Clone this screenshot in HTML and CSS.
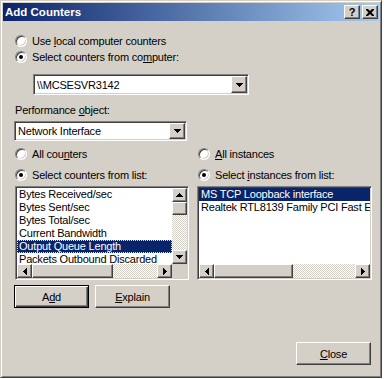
FILE: index.html
```html
<!DOCTYPE html>
<html lang="en">
  <head>
    <meta charset="UTF-8" />
    <title>Add Counters</title>
    <link rel="stylesheet" href="styles.css">
  </head>
  <body>
    <div class="window">
      <!-- Caption -->
      <div class="titlebar">
        <span class="title">Add Counters</span>
        <div class="caption-buttons">
          <button class="cap-btn">?</button>
          <button class="cap-btn">
            <svg width="8" height="7" viewBox="0 0 8 7"><path d="M0 0h2l2 2 2-2h2v1L5.5 3.5 8 6v1H6L4 5 2 7H0V6l2.5-2.5L0 1z" fill="#000"/></svg>
          </button>
        </div>
      </div>

      <div class="content">
        <!-- Computer source -->
        <div class="radio-row"><span class="radio"></span><span>Use <u>l</u>ocal computer counters</span></div>
        <div class="radio-row"><span class="radio checked"></span><span>Select counters from co<u>m</u>puter:</span></div>
        <div class="field combo combo-computer">
          <span class="combo-text">\\MCSESVR3142</span>
          <span class="combo-btn"><svg width="7" height="4" viewBox="0 0 7 4"><path d="M0 0h7v1H6v1H5v1H4v1H3V3H2V2H1V1H0z"/></svg></span>
        </div>

        <!-- Performance object -->
        <div class="label">Performance <u>o</u>bject:</div>
        <div class="field combo combo-object">
          <span class="combo-text">Network Interface</span>
          <span class="combo-btn"><svg width="7" height="4" viewBox="0 0 7 4"><path d="M0 0h7v1H6v1H5v1H4v1H3V3H2V2H1V1H0z"/></svg></span>
        </div>

        <div class="columns">
          <!-- Counters -->
          <div class="col">
            <div class="radio-row"><span class="radio"></span><span>All cou<u>n</u>ters</span></div>
            <div class="radio-row"><span class="radio checked"></span><span>Select counters from list:</span></div>
            <div class="field listbox listbox-counters">
              <div class="items">
                <div class="item">Bytes Received/sec</div>
                <div class="item">Bytes Sent/sec</div>
                <div class="item">Bytes Total/sec</div>
                <div class="item">Current Bandwidth</div>
                <div class="item selected focused">Output Queue Length</div>
                <div class="item">Packets Outbound Discarded</div>
              </div>
              <div class="vscroll">
                <span class="sb-btn"><svg width="7" height="4" viewBox="0 0 7 4"><path d="M3 0h1v1h1v1h1v1h1v1H0V3h1V2h1V1h1z"/></svg></span>
                <span class="sb-thumb"></span>
                <span class="sb-track"></span>
                <span class="sb-btn"><svg width="7" height="4" viewBox="0 0 7 4"><path d="M0 0h7v1H6v1H5v1H4v1H3V3H2V2H1V1H0z"/></svg></span>
              </div>
              <div class="hscroll">
                <span class="sb-btn"><svg width="4" height="7" viewBox="0 0 4 7"><path d="M3 0h1v7H3V6H2V5H1V4H0V3h1V2h1V1h1z"/></svg></span>
                <span class="sb-thumb" style="width: 81px"></span>
                <span class="sb-track"></span>
                <span class="sb-btn"><svg width="4" height="7" viewBox="0 0 4 7"><path d="M0 0h1v1h1v1h1v1h1v1H3v1H2v1H1v1H0z"/></svg></span>
              </div>
              <div class="sb-corner"></div>
            </div>
          </div>

          <!-- Instances -->
          <div class="col">
            <div class="radio-row"><span class="radio"></span><span><u>A</u>ll instances</span></div>
            <div class="radio-row"><span class="radio checked"></span><span>Select <u>i</u>nstances from list:</span></div>
            <div class="field listbox listbox-instances">
              <div class="items">
                <div class="item selected">MS TCP Loopback interface</div>
                <div class="item">Realtek RTL8139 Family PCI Fast Ethernet NIC</div>
              </div>
              <div class="hscroll">
                <span class="sb-btn"><svg width="4" height="7" viewBox="0 0 4 7"><path d="M3 0h1v7H3V6H2V5H1V4H0V3h1V2h1V1h1z"/></svg></span>
                <span class="sb-thumb" style="width: 79px"></span>
                <span class="sb-track"></span>
                <span class="sb-btn"><svg width="4" height="7" viewBox="0 0 4 7"><path d="M0 0h1v1h1v1h1v1h1v1H3v1H2v1H1v1H0z"/></svg></span>
              </div>
            </div>
          </div>
        </div>

        <div class="button-row">
          <button class="btn default">A<u>d</u>d</button>
          <button class="btn"><u>E</u>xplain</button>
        </div>

        <div class="close-row">
          <button class="btn"><u>C</u>lose</button>
        </div>
      </div>
    </div>
  </body>
</html>
```

FILE: styles.css
```css
/* Page */
html,
body {
  margin: 0;
}
body {
  background: #fff;
  font-family: "Liberation Sans", Arial, sans-serif;
  font-size: 11px;
  letter-spacing: -0.2px;
  color: #000;
}
/* Classic window frame */
.window {
  width: 382px;
  height: 378px;
  box-sizing: border-box;
  background: #d4d0c8;
  border: 1px solid;
  border-color: #d4d0c8 #404040 #404040 #d4d0c8;
  box-shadow: inset 1px 1px #fff, inset -1px -1px #808080;
  padding: 2px;
}
.titlebar {
  height: 18px;
  display: flex;
  align-items: center;
  padding-left: 2px;
  background: linear-gradient(to right, #0a246a, #a6caf0);
}
.title {
  flex: 1;
  color: #fff;
  font-weight: bold;
  font-size: 11.5px;
  letter-spacing: 0;
}
.caption-buttons {
  display: flex;
  gap: 2px;
  margin-right: 1px;
}
.cap-btn,
.combo-btn,
.sb-btn,
.sb-thumb,
.btn {
  box-sizing: border-box;
  background: #d4d0c8;
  border: 1px solid;
  border-color: #fff #404040 #404040 #fff;
  box-shadow: inset -1px -1px #808080;
}
.cap-btn {
  width: 16px;
  height: 14px;
  padding: 0;
  display: flex;
  align-items: center;
  justify-content: center;
  font-family: "Liberation Sans", Arial, sans-serif;
  font-weight: bold;
  font-size: 11px;
  line-height: 1;
}
/* Dialog body */
.content {
  padding: 12px 0 0 11px;
}
.radio-row {
  display: flex;
  align-items: center;
  gap: 5px;
  height: 16px;
  padding-left: 1px;
  white-space: nowrap;
}
.radio {
  position: relative;
  flex: none;
  width: 12px;
  height: 12px;
  box-sizing: border-box;
  border-radius: 50%;
  border: 1px solid;
  border-color: #808080 #fff #fff #808080;
  box-shadow: inset 1px 1px #404040, inset -1px -1px #d4d0c8;
  background: #fff;
}
.radio.checked::after {
  content: "";
  position: absolute;
  left: 3px;
  top: 3px;
  width: 4px;
  height: 4px;
  border-radius: 50%;
  background: #000;
}
/* Sunken fields */
.field {
  box-sizing: border-box;
  background: #fff;
  border: 1px solid;
  border-color: #808080 #fff #fff #808080;
  box-shadow: inset 1px 1px #404040, inset -1px -1px #d4d0c8;
  padding: 1px;
}
.combo {
  display: flex;
  align-items: stretch;
}
.combo-text {
  flex: 1;
  display: flex;
  align-items: center;
  padding-left: 2px;
}
.combo-btn {
  width: 16px;
  display: flex;
  align-items: center;
  justify-content: center;
}
.combo-computer {
  width: 216px;
  height: 21px;
  margin: 9px 0 0 19px;
}
.label {
  height: 14px;
  line-height: 14px;
  margin-top: 8px;
  padding-left: 1px;
}
.combo-object {
  width: 173px;
  height: 20px;
  margin-top: 4px;
}
/* Counters / instances columns */
.columns {
  display: grid;
  grid-template-columns: 183px 175px;
  margin-top: 5px;
}
.col .radio-row + .radio-row {
  margin-top: 5px;
}
.listbox {
  height: 94px;
  margin-top: 3px;
  display: grid;
  grid-template-rows: 1fr 14px;
  overflow: hidden;
}
.listbox-counters {
  width: 174px;
  margin-left: 1px;
  grid-template-columns: 1fr 15px;
}
.listbox-instances {
  width: 175px;
  grid-template-columns: 1fr;
}
.items {
  overflow: hidden;
  min-width: 0;
}
.item {
  height: 13px;
  line-height: 13px;
  padding-left: 2px;
  white-space: nowrap;
}
.item.selected {
  background: #0a246a;
  color: #fff;
}
.item.focused {
  outline: 1px dotted #f0e6a0;
  outline-offset: -1px;
}
/* Scroll bars */
.vscroll {
  display: flex;
  flex-direction: column;
}
.vscroll .sb-btn {
  height: 14px;
}
.vscroll .sb-thumb {
  height: 13px;
}
.hscroll {
  display: flex;
  min-width: 0;
}
.sb-btn {
  flex: none;
  width: 15px;
  display: flex;
  align-items: center;
  justify-content: center;
}
.sb-thumb {
  flex: none;
}
.sb-track {
  flex: 1;
  background-color: #fff;
  background-image: repeating-conic-gradient(#d4d0c8 0 25%, #fff 0 50%);
  background-size: 2px 2px;
}
.sb-corner {
  background: #d4d0c8;
}
/* Push buttons */
.btn {
  width: 75px;
  height: 23px;
  padding: 0;
  font-family: inherit;
  font-size: 11px;
  letter-spacing: -0.2px;
  color: #000;
}
.btn.default {
  border-color: #000;
  box-shadow: inset 1px 1px #fff, inset -1px -1px #404040, inset -2px -2px #808080;
}
.button-row {
  display: flex;
  gap: 6px;
  margin-top: 5px;
}
.close-row {
  display: flex;
  justify-content: flex-end;
  padding-right: 8px;
  margin-top: 34px;
}
```
